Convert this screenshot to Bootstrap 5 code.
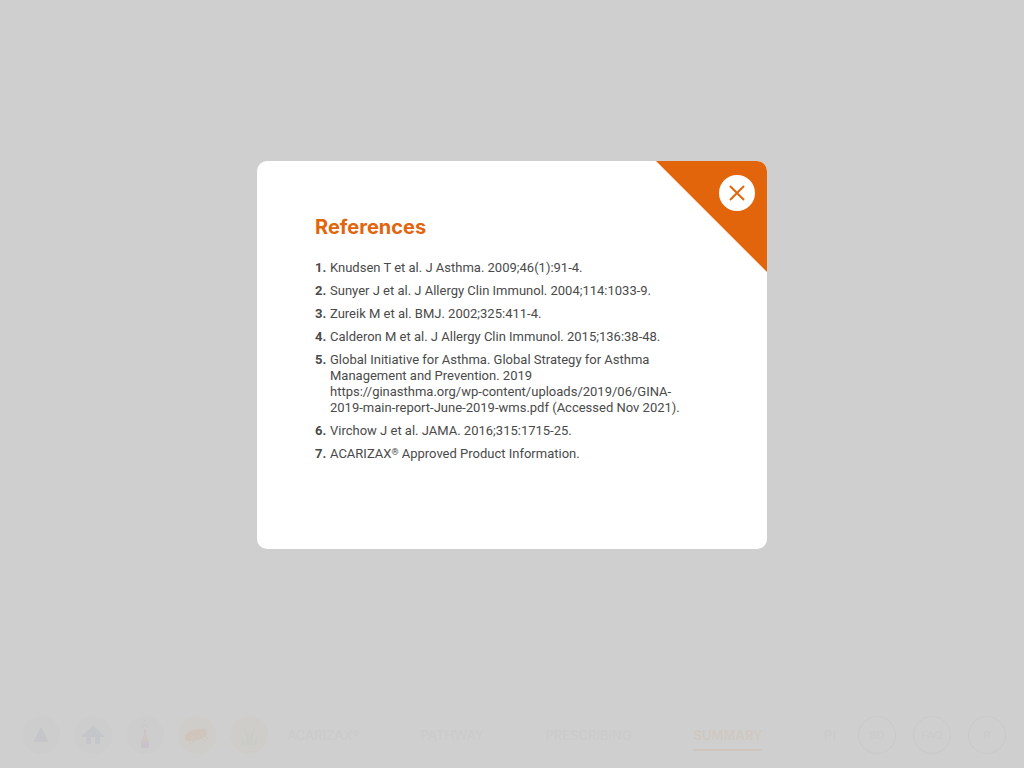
<!DOCTYPE html>
<html lang="en">
<head>
<meta charset="utf-8">
<meta name="viewport" content="width=device-width, initial-scale=1">
<title>References</title>
<link href="https://cdn.jsdelivr.net/npm/bootstrap@5.3.0/dist/css/bootstrap.min.css" rel="stylesheet">
<style>
  body { background: #cfcfcf; color: #4a4a4a; font-family: Roboto, "Liberation Sans", sans-serif; }
  .ref-dialog { width: 100%; max-width: 510px; min-height: 388px; border-radius: 10px; padding: 54px 85px 54px 58px; }
  .corner-fold { width: 111px; height: 111px; background: #e2650c; clip-path: polygon(0 0, 100% 0, 100% 100%); }
  .close-btn { top: 14px; right: 12px; width: 36px; height: 36px; color: #e2650c; }
  .ref-title { color: #e2650c; font: 700 20px/24px Inter, sans-serif; margin-bottom: 21px; }
  .ref-list { font-size: 13px; line-height: 16px; counter-reset: ref; gap: 7px; }
  .ref-list li { counter-increment: ref; display: grid; grid-template-columns: 15px 1fr; }
  .ref-list li::before { content: counter(ref) "."; font-weight: 700; }
  .reg-sign { font-size: 9px; line-height: 1; vertical-align: 3px; }
  .bottom-bar { padding: 6px 18px 14px 22px; font: 500 13px/16px Inter, sans-serif; }
  .icon-set { gap: 14px; }
  .round-icon { width: 38px; height: 38px; background: #cdcdcd; }
  .round-icon.warm { background: #cfcdca; }
  .round-icon.grass { background: #cecdca; }
  .bottom-bar a { color: #cbcbcc; text-decoration: none; }
  .page-links { margin: 0 22px 0 19px; }
  .bottom-bar a.current { color: #d0c8c1; font-weight: 600; padding: 8px 0 6px; border-bottom: 2px solid #d0c6be; }
  .ring-set { gap: 17px; }
  .bottom-bar .ring { width: 38px; height: 38px; border: 1px solid #cacaca; font-size: 11px; }
</style>
</head>
<body class="min-vh-100 d-flex flex-column">
<main class="flex-grow-1 d-flex align-items-center justify-content-center">
  <section class="ref-dialog bg-white position-relative overflow-hidden" role="dialog" aria-labelledby="ref-title">
    <div class="corner-fold position-absolute top-0 end-0"></div>
    <button type="button" class="close-btn btn bg-white rounded-circle border-0 p-0 position-absolute d-flex align-items-center justify-content-center" aria-label="Close">
      <svg width="16" height="16" viewBox="0 0 16 16" fill="none" stroke="currentColor" stroke-width="2"><path d="M1 1l14 14M15 1L1 15"/></svg>
    </button>
    <h1 class="ref-title" id="ref-title">References</h1>
    <ol class="ref-list list-unstyled d-flex flex-column mb-0">
      <li>Knudsen T et al. J Asthma. 2009;46(1):91-4.</li>
      <li>Sunyer J et al. J Allergy Clin Immunol. 2004;114:1033-9.</li>
      <li>Zureik M et al. BMJ. 2002;325:411-4.</li>
      <li>Calderon M et al. J Allergy Clin Immunol. 2015;136:38-48.</li>
      <li><span>Global Initiative for Asthma. Global Strategy for Asthma<br>Management and Prevention. 2019<br>https://ginasthma.org/wp-content/uploads/2019/06/GINA-<br>2019-main-report-June-2019-wms.pdf (Accessed Nov 2021).</span></li>
      <li>Virchow J et al. JAMA. 2016;315:1715-25.</li>
      <li><span>ACARIZAX<span class="reg-sign">®</span> Approved Product Information.</span></li>
    </ol>
  </section>
</main>
<nav class="bottom-bar d-flex align-items-center" aria-label="Main">
  <div class="icon-set d-flex">
    <a href="#" class="round-icon rounded-circle" aria-label="Up"><svg class="d-block" width="38" height="38" viewBox="0 0 38 38"><path d="M19 11l8 15H11z" fill="#c4c6c9"/></svg></a>
    <a href="#" class="round-icon rounded-circle" aria-label="Home"><svg class="d-block" width="38" height="38" viewBox="0 0 38 38"><path d="M19 9l11 11v1h-4v7h-5v-7h-4v7h-5v-7H8v-1z" fill="#c4c6c9"/></svg></a>
    <a href="#" class="round-icon rounded-circle" aria-label="Bottle"><svg class="d-block" width="38" height="38" viewBox="0 0 38 38"><path d="M18 13h2v5c0 3 3 5 3 8h-8c0-3 3-5 3-8z" fill="#cdc5c4"/><path d="M15 26h8v5q0 1-1 1h-6q-1 0-1-1z" fill="#c7c3c9"/><path d="M18 13h2v4h-2z" fill="#c8c4c9"/><g fill="#c7c9ca"><circle cx="16" cy="8" r="1"/><circle cx="19" cy="5" r="1"/><circle cx="22" cy="8" r="1"/><circle cx="19" cy="9" r="1"/><circle cx="17" cy="11" r="1"/><circle cx="21" cy="11" r="1"/></g></svg></a>
    <a href="#" class="round-icon warm rounded-circle" aria-label="Mite"><svg class="d-block" width="38" height="38" viewBox="0 0 38 38"><path d="M7 21c1-5 8-8 15-8 4 0 7 2 7 5 0 2-2 3-4 3-4 3-10 5-15 4-3 0-4-2-3-4z" fill="#d0c5bc"/><path d="M24 14q4-3 5 2M25 20l4 1 1 3M22 22l4 1 2 3M16 24l-1 3M11 24v3l3 1" fill="none" stroke="#d0c5bc" stroke-width="1"/></svg></a>
    <a href="#" class="round-icon grass rounded-circle" aria-label="Grass"><svg class="d-block" width="38" height="38" viewBox="0 0 38 38"><path d="M12 29q1-6-3-10 6 3 6 10zM16 29q1-12-4-19 9 7 7 19zM20 29q-1-12 5-17-4 8-2 17zM24 29q0-8 5-11-3 5-2 11z" fill="#c8cbc6"/></svg></a>
  </div>
  <div class="page-links flex-grow-1 d-flex align-items-center justify-content-between">
    <a href="#">ACARIZAX<span class="reg-sign">®</span></a>
    <a href="#">PATHWAY</a>
    <a href="#">PRESCRIBING</a>
    <a href="#" class="current" aria-current="page">SUMMARY</a>
    <a href="#">PI</a>
  </div>
  <div class="ring-set d-flex">
    <a href="#" class="ring rounded-circle d-flex align-items-center justify-content-center">SD</a>
    <a href="#" class="ring rounded-circle d-flex align-items-center justify-content-center">FAQ</a>
    <a href="#" class="ring rounded-circle d-flex align-items-center justify-content-center">R</a>
  </div>
</nav>
<script src="https://cdn.jsdelivr.net/npm/bootstrap@5.3.0/dist/js/bootstrap.bundle.min.js"></script>
</body>
</html>
